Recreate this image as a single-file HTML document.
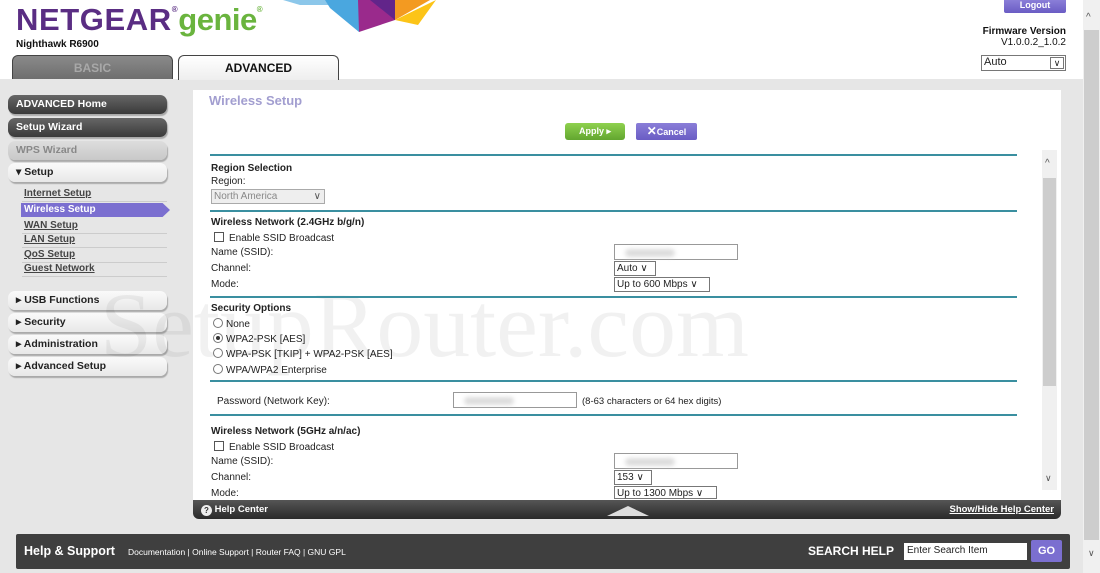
<!DOCTYPE html>
<html><head><meta charset="utf-8"><style>
*{margin:0;padding:0;box-sizing:border-box}
body{width:1100px;height:573px;overflow:hidden;background:#e6e6e6;font-family:"Liberation Sans",Arial,sans-serif;font-size:10px;color:#222;position:relative}
.a{position:absolute}
.top{left:0;top:0;width:1083px;height:79px;background:#fff}
.nb{left:8px;width:159px;height:19px;border-radius:7px;font-weight:bold;font-size:10.5px;padding:3px 0 0 8px;box-shadow:1px 2px 1px #aaa}
.dark{background:linear-gradient(#666,#3a3a3a);color:#fff}
.lt{background:linear-gradient(#fafafa,#e8e8e8);color:#222}
.sub{left:22px;width:145px;font-size:10px;font-weight:bold;color:#444;text-decoration:underline;border-bottom:1px solid #ccc;height:15px;padding:1px 0 0 2px}
.hr{left:210px;width:807px;height:2px;background:#3a8fa0}
.lbl{font-size:10px;color:#222}
.b{font-weight:bold}
.sel{border:1px solid #777;background:#fff;font-size:10px;padding:0 2px;height:15px;line-height:13px}
.inp{border:1px solid #999;background:#fff;height:16px}
.blur{position:absolute;left:10px;top:4px;width:50px;height:8px;background:#ddd;border-radius:4px;filter:blur(2px)}
.rad{display:inline-block;width:10px;height:10px;border:1px solid #777;border-radius:50%;vertical-align:-1px;margin-right:3px;background:#fff;position:relative}
</style></head><body>
<div class="a top"></div>
<div class="a" style="left:16px;top:2px;font-size:31px;font-weight:900;color:#5a2d83;letter-spacing:0.6px">NETGEAR<span style="font-size:8px;vertical-align:18px">®</span><span style="color:#6ab43e;font-weight:bold;letter-spacing:-0.5px">genie</span><span style="font-size:8px;color:#6ab43e;vertical-align:18px">®</span></div>
<svg class="a" style="left:270px;top:0" width="180" height="40"><polygon points="13,0 80,0 65,5 30,5" fill="#8cc7ea"/><polygon points="55,0 90,0 89,32 60,8" fill="#4aa7df"/><polygon points="88,0 125,0 125,20 89,32" fill="#9a2a8c"/><polygon points="100,0 130,0 125,20" fill="#62258a"/><polygon points="125,0 160,0 125,20" fill="#f39a21"/><polygon points="125,20 166,0 148,25" fill="#fcc418"/></svg>
<div class="a b" style="left:16px;top:39px;font-size:10px;color:#111">Nighthawk R6900</div>
<div class="a" style="left:12px;top:55px;width:161px;height:24px;background:linear-gradient(#8a8a8a,#6e6e6e);border:1px solid #444;border-bottom:none;border-radius:6px 6px 0 0;color:#a8a8a8;font-weight:bold;font-size:12px;text-align:center;padding-top:5px">BASIC</div>
<div class="a" style="left:178px;top:55px;width:161px;height:25px;background:linear-gradient(#fff,#eee);border:1px solid #444;border-bottom:none;border-radius:6px 6px 0 0;color:#111;font-weight:bold;font-size:12px;text-align:center;padding-top:5px">ADVANCED</div>
<div class="a" style="left:1004px;top:0;width:62px;height:13px;background:linear-gradient(#8a7ed8,#6a5cc4);color:#fff;font-weight:bold;font-size:9px;text-align:center;border-radius:0 0 2px 2px">Logout</div>
<div class="a b" style="right:34px;top:26px;font-size:10px;text-align:right;color:#111">Firmware Version</div>
<div class="a" style="right:34px;top:37px;font-size:10px;color:#111">V1.0.0.2_1.0.2</div>
<div class="a sel" style="left:981px;top:55px;width:85px;height:16px;font-size:11px">Auto<span style="position:absolute;right:1px;top:1px;border:1px solid #777;width:14px;height:12px;font-size:9px;text-align:center;line-height:11px">∨</span></div>
<div class="a" style="left:1083px;top:0;width:17px;height:573px;background:#f0f0f0"></div>
<div class="a" style="left:1084px;top:30px;width:15px;height:510px;background:#cdcdcd"></div>
<div class="a" style="left:1086px;top:12px;font-size:10px;color:#555">^</div>
<div class="a" style="left:1088px;top:548px;font-size:9px;color:#555">∨</div>

<div class="a nb dark" style="top:95px">ADVANCED Home</div>
<div class="a nb dark" style="top:118px">Setup Wizard</div>
<div class="a nb" style="top:141px;background:linear-gradient(#ddd,#c8c8c8);color:#888">WPS Wizard</div>
<div class="a nb lt" style="top:163px">▾ Setup</div>
<div class="a sub" style="top:187px">Internet Setup</div>
<div class="a" style="left:21px;top:203px;width:149px;height:14px;background:#7b6fd0;color:#fff;font-weight:bold;font-size:10px;padding:1px 0 0 3px;clip-path:polygon(0 0,95% 0,100% 50%,95% 100%,0 100%)">Wireless Setup</div>
<div class="a sub" style="top:219px">WAN Setup</div>
<div class="a sub" style="top:233px">LAN Setup</div>
<div class="a sub" style="top:248px">QoS Setup</div>
<div class="a sub" style="top:262px">Guest Network</div>
<div class="a nb lt" style="top:291px">▸ USB Functions</div>
<div class="a nb lt" style="top:313px">▸ Security</div>
<div class="a nb lt" style="top:335px">▸ Administration</div>
<div class="a nb lt" style="top:357px">▸ Advanced Setup</div>

<div class="a" style="left:193px;top:90px;width:868px;height:412px;background:#fff"></div>
<div class="a b" style="left:209px;top:93px;font-size:13px;color:#a29ed0">Wireless Setup</div>
<div class="a" style="left:565px;top:123px;width:60px;height:17px;background:linear-gradient(#8fd14f,#62a62f);border-radius:3px;color:#fff;font-weight:bold;font-size:9px;text-align:center;line-height:16px">Apply ▸</div>
<div class="a" style="left:636px;top:123px;width:61px;height:17px;background:linear-gradient(#8a7ed8,#6a5cc4);border-radius:2px;color:#fff;font-weight:bold;font-size:9px;text-align:center;line-height:16px"><b style="font-size:12px">✕</b>Cancel</div>
<div class="a hr" style="top:154px"></div>
<div class="a" style="left:1042px;top:150px;width:15px;height:340px;background:#f0f0f0"></div>
<div class="a" style="left:1043px;top:178px;width:13px;height:208px;background:#cdcdcd"></div>
<div class="a" style="left:1045px;top:158px;font-size:10px;color:#555">^</div>
<div class="a" style="left:1045px;top:473px;font-size:9px;color:#555">∨</div>

<div class="a" style="left:100px;top:272px;font-family:'Liberation Serif',serif;font-size:92px;color:#000;opacity:.05;white-space:nowrap;transform:scaleX(1.02);transform-origin:left">SetupRouter.com</div>

<div class="a lbl b" style="left:211px;top:163px">Region Selection</div>
<div class="a lbl" style="left:211px;top:176px">Region:</div>
<div class="a sel" style="left:211px;top:189px;width:114px;background:#eee;color:#888;border-color:#aaa">North America<span style="position:absolute;right:3px;color:#555">∨</span></div>
<div class="a hr" style="top:210px"></div>
<div class="a lbl b" style="left:211px;top:217px">Wireless Network (2.4GHz b/g/n)</div>
<div class="a lbl" style="left:214px;top:232px"><span style="display:inline-block;width:10px;height:10px;border:1px solid #555;vertical-align:-1px;margin-right:5px"></span>Enable SSID Broadcast</div>
<div class="a lbl" style="left:211px;top:247px">Name (SSID):</div>
<div class="a inp" style="left:614px;top:244px;width:124px"><div class="blur"></div></div>
<div class="a lbl" style="left:211px;top:263px">Channel:</div>
<div class="a sel" style="left:614px;top:261px;width:42px">Auto ∨</div>
<div class="a lbl" style="left:211px;top:279px">Mode:</div>
<div class="a sel" style="left:614px;top:277px;width:96px">Up to 600 Mbps ∨</div>
<div class="a hr" style="top:296px"></div>
<div class="a lbl b" style="left:211px;top:303px">Security Options</div>
<div class="a lbl" style="left:213px;top:318px"><span class="rad"></span>None</div>
<div class="a lbl" style="left:213px;top:333px"><span class="rad"><i style="position:absolute;left:2px;top:2px;width:4px;height:4px;border-radius:50%;background:#333"></i></span>WPA2-PSK [AES]</div>
<div class="a lbl" style="left:213px;top:348px"><span class="rad"></span>WPA-PSK [TKIP] + WPA2-PSK [AES]</div>
<div class="a lbl" style="left:213px;top:364px"><span class="rad"></span>WPA/WPA2 Enterprise</div>
<div class="a hr" style="top:380px"></div>
<div class="a lbl" style="left:217px;top:396px">Password (Network Key):</div>
<div class="a inp" style="left:453px;top:392px;width:124px"><div class="blur"></div></div>
<div class="a lbl" style="left:582px;top:396px;font-size:9.5px">(8-63 characters or 64 hex digits)</div>
<div class="a hr" style="top:414px"></div>
<div class="a lbl b" style="left:211px;top:426px">Wireless Network (5GHz a/n/ac)</div>
<div class="a lbl" style="left:214px;top:441px"><span style="display:inline-block;width:10px;height:10px;border:1px solid #555;vertical-align:-1px;margin-right:5px"></span>Enable SSID Broadcast</div>
<div class="a lbl" style="left:211px;top:456px">Name (SSID):</div>
<div class="a inp" style="left:614px;top:453px;width:124px"><div class="blur"></div></div>
<div class="a lbl" style="left:211px;top:472px">Channel:</div>
<div class="a sel" style="left:614px;top:470px;width:38px">153 ∨</div>
<div class="a lbl" style="left:211px;top:488px">Mode:</div>
<div class="a sel" style="left:614px;top:486px;width:103px;height:13px;overflow:hidden">Up to 1300 Mbps ∨</div>

<div class="a" style="left:193px;top:500px;width:868px;height:19px;background:linear-gradient(#555,#2a2a2a);border-radius:0 0 6px 6px"></div>
<div class="a b" style="left:201px;top:504px;color:#fff;font-size:9.5px"><span style="display:inline-block;width:11px;height:11px;border-radius:50%;background:#eee;color:#333;font-size:8px;text-align:center;line-height:11px;vertical-align:-1px">?</span> Help Center</div>
<div class="a" style="left:607px;top:506px;width:0;height:0;border-left:21px solid transparent;border-right:21px solid transparent;border-bottom:10px solid #ddd"></div>
<div class="a b" style="right:46px;top:504px;color:#fff;font-size:9.5px;text-decoration:underline">Show/Hide Help Center</div>

<div class="a" style="left:16px;top:534px;width:1054px;height:35px;background:#3f3f3f;border-radius:2px"></div>
<div class="a b" style="left:24px;top:544px;color:#fff;font-size:12.5px">Help &amp; Support</div>
<div class="a" style="left:128px;top:547px;color:#fff;font-size:8.5px">Documentation | Online Support | Router FAQ | GNU GPL</div>
<div class="a b" style="left:808px;top:544px;color:#fff;font-size:12px">SEARCH HELP</div>
<div class="a" style="left:904px;top:543px;width:123px;height:17px;background:#fff;font-size:10px;color:#222;padding:2px 3px">Enter Search Item</div>
<div class="a b" style="left:1031px;top:540px;width:31px;height:22px;background:#7b6fd0;color:#fff;font-size:11px;text-align:center;line-height:22px;border-radius:2px">GO</div>
</body></html>
